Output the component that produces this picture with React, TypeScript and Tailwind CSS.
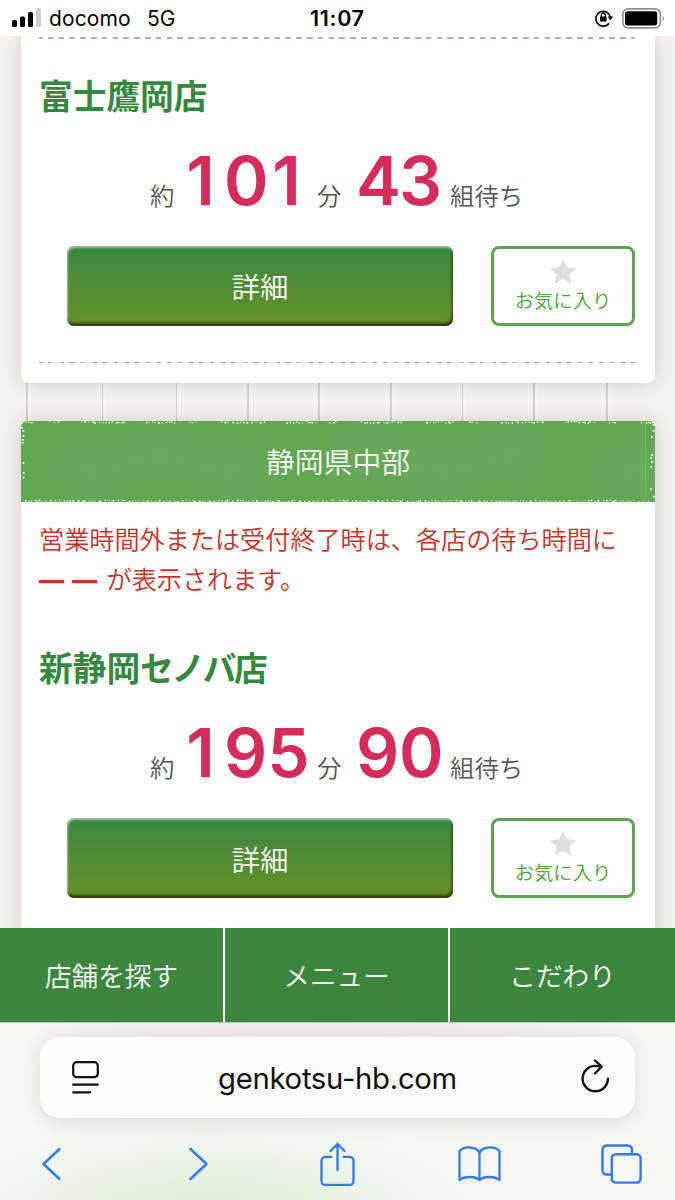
import React from "react";

interface Shop {
  name: React.ReactNode;
  minutes: string;
  groups: string;
}

const planks = [27, 102.5, 176.5, 248, 319, 391, 462.5, 534, 607];

const plankBackground = `linear-gradient(90deg, ${planks
  .map(
    (x) =>
      `transparent ${x - 1}px, #d6d0c8 ${x - 0.5}px, #d6d0c8 ${x + 0.5}px, #f8f6f1 ${x + 1}px, #f8f6f1 ${x + 3}px, transparent ${x + 6}px`
  )
  .join(", ")})`;

// chalky specks along the edges of the area title
const makeSpecks = () => {
  let seed = 7;
  const rand = () => {
    seed = (seed * 16807) % 2147483647;
    return seed / 2147483647;
  };
  const specks: { x: number; y: number; w: number; h: number }[] = [];
  const top = [[28, 37], [60, 104], [125, 155]];
  for (let base = -140; base < 634; base += 140) {
    top.forEach(([a, b]) => {
      for (let x = a; x < b; x += 1.6 + rand() * 3) {
        specks.push({ x: base + x, y: rand() * 1.4, w: 1 + rand(), h: 0.8 + rand() });
      }
    });
  }
  for (let x = 4; x < 628; x += 1.5 + rand() * 4) {
    specks.push({ x, y: 78.6 + rand() * 1.4, w: 0.8 + rand() * 1.2, h: 0.8 + rand() });
  }
  [6, 9, 14, 18, 21, 41, 51, 56].forEach((y) => {
    specks.push({ x: rand() * 2, y, w: 1.8, h: 1.8 });
  });
  [3, 9, 15, 33, 36, 40, 45, 67, 75].forEach((y) => {
    specks.push({ x: 629 + rand() * 3, y, w: 1.8, h: 1.8 });
  });
  return specks;
};

const specks = makeSpecks();

const StatusBar = () => (
  <div className="flex h-9 shrink-0 items-center bg-white pl-3 pr-[10px] text-black">
    <svg width="30" height="20" viewBox="0 0 30 20">
      <rect x="0" y="12" width="5" height="7" rx="1.5" />
      <rect x="8" y="8.5" width="5" height="10.5" rx="1.5" />
      <rect x="16" y="4" width="5" height="15" rx="1.5" />
      <rect x="24" y="0" width="5" height="19" rx="1.5" fill="#cfcfcf" />
    </svg>
    <div className="ml-[7px] w-[98px] pt-0.5 text-[21px] tracking-[0.1px]">docomo</div>
    <div className="w-[163px] pt-0.5 text-[21px]">5G</div>
    <div className="text-[21.5px] font-semibold tracking-[0.7px]">11:07</div>
    <svg className="ml-auto mr-2" width="20" height="20" viewBox="0 0 20 20">
      <path d="M14.6 15.8A7.4 7.4 0 1 1 16.4 9" fill="none" stroke="#000" strokeWidth="1.7" strokeLinecap="round" />
      <path d="M13.6 8.4h5.6l-2.8 3.8z" />
      <rect x="6" y="8.5" width="6.6" height="5" rx="0.8" />
      <path d="M7.3 9V7.2a2 2 0 0 1 4 0V9" fill="none" stroke="#000" strokeWidth="1.2" />
    </svg>
    <svg width="43" height="21" viewBox="0 0 43 21">
      <rect x="0.9" y="0.9" width="37.4" height="19" rx="5" fill="none" stroke="#8e8e8e" strokeWidth="1.6" />
      <rect x="3" y="3.2" width="32.2" height="14.2" rx="2.6" />
      <path d="M40.6 7.4v6.2c1.8-.8 1.8-5.4 0-6.2z" fill="#999" />
    </svg>
  </div>
);

const Dashes = () => (
  <div className="h-[1.5px] bg-[repeating-linear-gradient(90deg,#a3b4b1_0_5.6px,transparent_5.6px_10.8px)] bg-[position:-2px_0]" />
);

const Digits = ({ value }: { value: string }) => (
  <b className="flex text-[67.5px] font-semibold text-[#d62b5b]">
    {value.split("").map((d, i) => (
      <span key={i} className={d === "1" ? "w-[43px] pr-1 text-center" : "w-[43px] text-center"}>
        {d}
      </span>
    ))}
  </b>
);

const ShopCard = ({ name, minutes, groups }: Shop) => (
  <section>
    <h2 className="h-[50px] text-[33.7px] font-bold leading-[50px] text-[#36873f]">{name}</h2>
    <div className="mt-[13px] flex h-[91px] items-baseline pl-[111px] text-[24.4px] font-[350] leading-[91px] text-[#555]">
      <span className="w-[31px]">約</span>
      <div className="w-[136px]">
        <Digits value={minutes} />
      </div>
      <span className="w-[39px]">分</span>
      <div className="w-[94px]">
        <Digits value={groups} />
      </div>
      <span>組待ち</span>
    </div>
    <div className="mt-5 flex gap-[38px] pl-7">
      <button className="h-20 w-[386px] rounded-[7px] bg-linear-to-b from-[#37883f] to-[#669126] pt-[6px] text-[28.5px] font-[350] text-white shadow-[inset_1px_2px_2px_rgba(255,255,255,0.5),inset_-1px_-3px_3px_rgba(30,20,0,0.7)]">
        詳細
      </button>
      <button className="flex h-20 w-[144px] flex-col items-center rounded-[8px] border-[3.4px] border-[#60a355] pt-[9px]">
        <svg width="28" height="26" viewBox="0 0 28 26" fill="#dedede">
          <path d="M14 1l4 8.4 9.3.9-7 6.3 2 9L14 21l-8.3 4.6 2-9-7-6.3 9.3-.9z" />
        </svg>
        <span className="mt-[3px] text-[19.3px] font-[350] leading-7 text-[#56a047]">お気に入り</span>
      </button>
    </div>
  </section>
);

const AreaTitle = () => (
  <div className="relative flex h-[81px] items-center justify-center rounded-t-[6px] bg-[#63a753]">
    <svg className="absolute inset-0" width="634" height="81" viewBox="0 0 634 81">
      <defs>
        <filter id="smudge" x="-20%" y="-40%" width="140%" height="180%">
          <feGaussianBlur stdDeviation="10" />
        </filter>
        <clipPath id="band">
          <rect width="634" height="81" rx="5" />
        </clipPath>
      </defs>
      <g clipPath="url(#band)">
        <g filter="url(#smudge)" fill="#6cac5e" opacity="0.6">
          {[70, 140, 210, 350, 420, 490, 610].map((x, i) => (
            <ellipse key={x} cx={x} cy={i % 2 ? 34 : 50} rx="44" ry="26" />
          ))}
        </g>
        <path d="M624.5 2v77" stroke="#7fb971" strokeWidth="0.8" />
        <g fill="#e9f5e3">
          {specks.map((s, i) => (
            <rect key={i} x={s.x} y={s.y} width={s.w} height={s.h} />
          ))}
        </g>
      </g>
    </svg>
    <h1 className="relative pt-0.5 text-[28.8px] font-[350] text-white">静岡県中部</h1>
  </div>
);

const BottomNav = () => (
  <nav className="flex h-[95px] shrink-0 border-b border-[#b9cdb9] bg-[#3c8640] text-[26.6px] font-[350] text-white">
    <a className="flex w-[223px] items-center justify-center pt-[3px]">店舗を探す</a>
    <a className="flex w-[227px] items-center justify-center border-x-2 border-white pt-[3px]">メニュー</a>
    <a className="flex flex-1 items-center justify-center pt-[3px]">こだわり</a>
  </nav>
);

const Safari = () => (
  <footer className="flex-1 bg-[radial-gradient(ellipse_300px_100px_at_210px_190px,#dcefd6,transparent),radial-gradient(ellipse_340px_70px_at_330px_0px,#f3eaeb,transparent)] bg-[#f8f8f7] pt-[14px]">
    <div className="mx-10 flex h-[81px] items-center rounded-[20px] bg-[#fdfcfd] pl-8 pr-[25px] shadow-[0_3px_22px_rgba(0,0,0,0.13)]">
      <svg width="27" height="33" viewBox="0 0 27 33" fill="none" stroke="#111" strokeWidth="2.2" strokeLinecap="round">
        <rect x="1.2" y="1.2" width="24.6" height="15" rx="3.5" />
        <path d="M1.2 23.7h24.6M1.2 31.3h17" />
      </svg>
      <span className="flex-1 pr-[5px] pt-0.5 text-center text-[29.3px] tracking-[-0.3px] text-[#111]">genkotsu-hb.com</span>
      <svg className="mb-[3px]" width="29" height="34" viewBox="0 0 29 34" fill="none" stroke="#111" strokeWidth="2.4" strokeLinecap="round" strokeLinejoin="round">
        <path d="M27 19.6A12.7 12.7 0 1 1 14.3 6.9c2 0 3.7.2 5.3.8M14 1.5l6.6 6.2-6.6 6.8" />
      </svg>
    </div>
    <div className="mt-[22px] flex h-12 items-center pl-[41px] text-[#3478f0]">
      <svg width="21" height="34" viewBox="0 0 21 34" fill="none" stroke="currentColor" strokeWidth="2.5" strokeLinecap="round" strokeLinejoin="round">
        <path d="M18.5 2L2.5 17l16 15" />
      </svg>
      <svg className="ml-[126px]" width="21" height="34" viewBox="0 0 21 34" fill="none" stroke="currentColor" strokeWidth="2.5" strokeLinecap="round" strokeLinejoin="round">
        <path d="M2.5 2l16 15-16 15" />
      </svg>
      <svg className="ml-[111px]" width="35" height="44" viewBox="0 0 35 44" fill="none" stroke="currentColor" strokeWidth="2.3" strokeLinecap="round" strokeLinejoin="round">
        <path d="M11.5 14.8H5.5a4 4 0 0 0-4 4V39a4 4 0 0 0 4 4h24a4 4 0 0 0 4-4V18.8a4 4 0 0 0-4-4h-6M17.5 28V2M10.5 9l7-7 7 7" />
      </svg>
      <svg className="ml-[103px]" width="43" height="36" viewBox="0 0 43 36" fill="none" stroke="currentColor" strokeWidth="2.3" strokeLinejoin="round">
        <path d="M21.5 6.5C17.5 0 6 0 1.5 5v29c5-4 16-4 20 0 4-4 15-4 20 0V5C37 0 25.5 0 21.5 6.5zM21.5 6.5V34" />
      </svg>
      <svg className="ml-[100px]" width="41" height="40" viewBox="0 0 41 40" fill="none" stroke="currentColor" strokeWidth="2.4">
        <path d="M10.5 30.5H5.5a4 4 0 0 1-4-4v-21a4 4 0 0 1 4-4h21.500a4 4 0 0 1 4 4v4.5" />
        <rect x="10.8" y="10.2" width="28.8" height="28.4" rx="4" />
      </svg>
    </div>
  </footer>
);

const App = () => {
  return (
    <div className="flex h-[1200px] w-[675px] flex-col overflow-hidden bg-white font-[Inter,'Noto_Sans_CJK_JP',sans-serif]">
      <StatusBar />
      <main className="h-[892px] shrink-0 overflow-hidden bg-[#f5f2ed] pl-[21px] pr-5" style={{ backgroundImage: plankBackground }}>
        <div className="h-[347px] rounded-b-[8px] bg-white pl-[18px] pr-5 pt-px shadow-[0_0_18px_rgba(60,50,40,0.2)]">
          <Dashes />
          <div className="mt-[33px]">
            <ShopCard name="富士鷹岡店" minutes="101" groups="43" />
          </div>
          <div className="mt-9">
            <Dashes />
          </div>
        </div>
        <div className="mt-[38px] h-[600px] rounded-t-[6px] bg-white shadow-[0_0_18px_rgba(60,50,40,0.2)]">
          <AreaTitle />
          <div className="pl-[18px] pr-5">
            <p className="h-[142px] whitespace-nowrap pt-[18px] text-[25.13px] font-[350] leading-[40px] text-[#c0342c]">
              営業時間外または受付終了時は、各店の待ち時間に
              <br />
              <span className="[word-spacing:2.4px]">
                <b className="font-extrabold">— —</b> が表示されます。
              </span>
            </p>
            <ShopCard
              name={
                <>
                  新静岡<span className="tracking-[-2.4px]">セノバ</span>店
                </>
              }
              minutes="195"
              groups="90"
            />
          </div>
        </div>
      </main>
      <BottomNav />
      <Safari />
    </div>
  );
};

export default App;
